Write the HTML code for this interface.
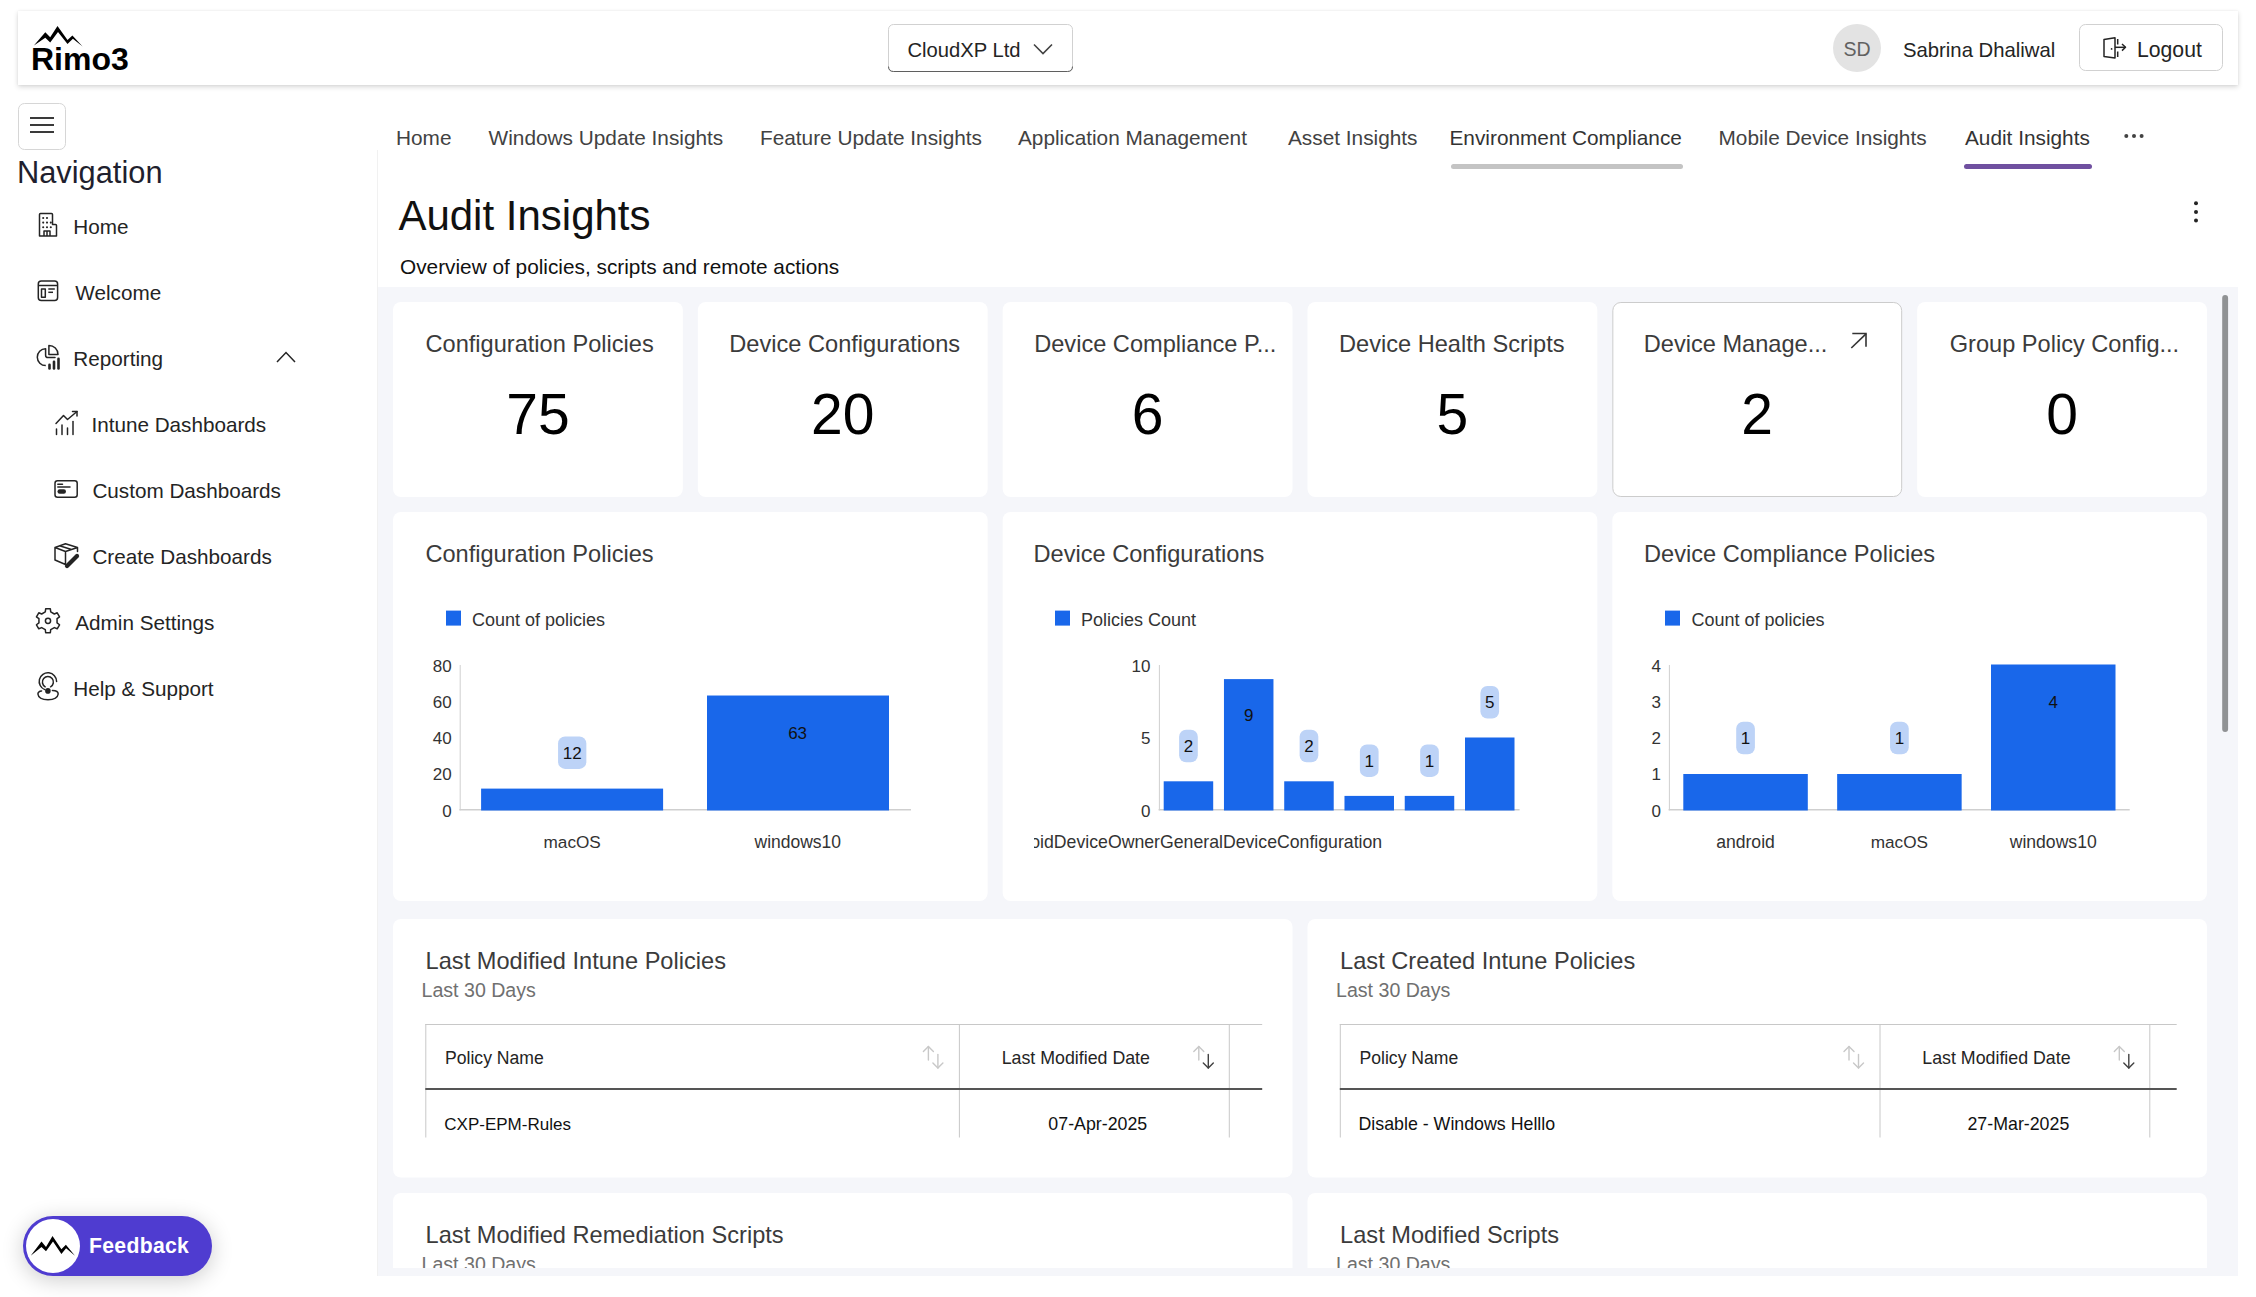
<!DOCTYPE html>
<html><head><meta charset="utf-8"><title>Audit Insights</title>
<style>
*{box-sizing:border-box;margin:0;padding:0}
html,body{width:2256px;height:1297px;overflow:hidden;background:#fff;font-family:"Liberation Sans", sans-serif}
#hdr{position:absolute;left:18px;top:11px;width:2220px;height:74px;background:#fff;box-shadow:0 2px 5px rgba(0,0,0,0.16),0 0 2px rgba(0,0,0,0.06)}
svg{position:absolute;left:0;top:0}
svg text{font-family:"Liberation Sans", sans-serif;white-space:pre}
#fb{position:absolute;left:23px;top:1216px;width:189px;height:60px;border-radius:30px;background:#4f3cd0;box-shadow:0 4px 22px rgba(0,0,0,0.20)}
#fbc{position:absolute;left:2.7px;top:2.6px;width:54.3px;height:54.3px;border-radius:50%;background:#fff}
#fbt{position:absolute;left:66px;top:0;line-height:60px;font-size:21.2px;font-weight:700;color:#fff;white-space:nowrap;letter-spacing:0.3px}
</style></head><body>
<div id="hdr"></div>
<svg width="2256" height="1297" viewBox="0 0 2256 1297">
<rect x="378.00" y="287.00" width="1860.00" height="989.00" rx="0" fill="#f5f6fa" />
<line x1="377.5" y1="150" x2="377.5" y2="1276" stroke="#f1f1f1" stroke-width="1" />
<polygon points="33.9,45.6 45.3,32.2 50.2,37.3 57.5,26.1 67.5,40 72.4,35.4 82.6,46.6 72.9,38.8 67.5,44.1 58,31.9 50.2,42.4 45.3,37.8" fill="#000"/>
<text x="31.0" y="69.7" font-size="32" fill="#000" font-weight="700" text-anchor="start" >Rimo3</text>
<rect x="888.50" y="24.50" width="184.00" height="47.00" rx="5" fill="#fff" stroke="#d1d1d1" stroke-width="1"/>
<path d="M888.5,66.5 Q888.5,71.5 893.5,71.5 L1067.5,71.5 Q1072.5,71.5 1072.5,66.5" fill="none" stroke="#5f5f5f" stroke-width="1"/>
<text x="907.5" y="57.3" font-size="20.2" fill="#242424" font-weight="400" text-anchor="start" >CloudXP Ltd</text>
<polyline points="1034,44.5 1043,53.5 1052,44.5" fill="none" stroke="#424242" stroke-width="1.6"/>
<circle cx="1857" cy="48" r="24" fill="#e3e3e3"/>
<text x="1857.0" y="56.3" font-size="19.5" fill="#616161" font-weight="400" text-anchor="middle" >SD</text>
<text x="1903.0" y="57.2" font-size="20.3" fill="#242424" font-weight="400" text-anchor="start" >Sabrina Dhaliwal</text>
<rect x="2079.50" y="24.50" width="143.00" height="46.00" rx="6" fill="#fff" stroke="#d1d1d1" stroke-width="1"/>
<g fill="none" stroke="#242424" stroke-width="1.5" stroke-linejoin="round"><path d="M2104,39.5 L2115,37.8 L2115,58 L2104,56.4 Z"/><line x1="2117.7" y1="39" x2="2117.7" y2="44.5"/><line x1="2117.7" y1="51.5" x2="2117.7" y2="57"/><line x1="2115" y1="47.3" x2="2125.5" y2="47.3"/><polyline points="2122,44 2125.5,47.3 2122,50.6"/></g><circle cx="2111.6" cy="48.9" r="0.9" fill="#242424"/>
<text x="2137.0" y="56.7" font-size="21.2" fill="#242424" font-weight="400" text-anchor="start" >Logout</text>
<rect x="18.50" y="103.50" width="47.00" height="46.00" rx="6" fill="#fff" stroke="#d6d6d6" stroke-width="1"/>
<line x1="30" y1="118" x2="54" y2="118" stroke="#242424" stroke-width="1.8" />
<line x1="30" y1="125" x2="54" y2="125" stroke="#242424" stroke-width="1.8" />
<line x1="30" y1="132" x2="54" y2="132" stroke="#242424" stroke-width="1.8" />
<text x="17.0" y="183.0" font-size="30.8" fill="#1f1f2e" font-weight="400" text-anchor="start" >Navigation</text>
<text x="73.3" y="234.2" font-size="20.7" fill="#242424" font-weight="400" text-anchor="start" >Home</text>
<text x="75.3" y="300.2" font-size="20.7" fill="#242424" font-weight="400" text-anchor="start" >Welcome</text>
<text x="73.3" y="366.3" font-size="20.7" fill="#242424" font-weight="400" text-anchor="start" >Reporting</text>
<text x="91.4" y="432.0" font-size="20.7" fill="#242424" font-weight="400" text-anchor="start" >Intune Dashboards</text>
<text x="92.4" y="498.0" font-size="20.7" fill="#242424" font-weight="400" text-anchor="start" >Custom Dashboards</text>
<text x="92.4" y="564.0" font-size="20.7" fill="#242424" font-weight="400" text-anchor="start" >Create Dashboards</text>
<text x="75.3" y="630.2" font-size="20.7" fill="#242424" font-weight="400" text-anchor="start" >Admin Settings</text>
<text x="73.3" y="696.3" font-size="20.7" fill="#242424" font-weight="400" text-anchor="start" >Help &amp; Support</text>
<polyline points="277,362 286,352.5 295,362" fill="none" stroke="#242424" stroke-width="1.5"/>
<g fill="none" stroke="#242424" stroke-width="1.5" stroke-linejoin="round"><path d="M39.5,236 L39.5,214.5 Q39.5,213.5 40.5,213.5 L51.5,213.5 Q52.5,213.5 52.5,214.5 L52.5,224.5 L55.5,224.5 Q56.5,224.5 56.5,225.5 L56.5,236 Z"/><path d="M44,236 L44,231 L50,231 L50,236 M47,231 L47,236"/><rect x="38.3" y="281" width="19.3" height="19.6" rx="3"/><line x1="38.3" y1="285.5" x2="57.6" y2="285.5"/><rect x="41.5" y="289" width="3.8" height="8.3"/><line x1="48.3" y1="289" x2="54.8" y2="289"/><line x1="48.3" y1="292.3" x2="53" y2="292.3"/><path d="M45.6,348.8 A8.4,8.4 0 0 0 45.8,365.6"/><path d="M45.6,348.8 L45.6,355.2 Q45.6,357.6 48,357.6 L55,357.6" stroke-linecap="round"/><path d="M48.9,345.4 L48.9,354.5 L58,354.5 A9.1,9.1 0 0 0 48.9,345.4 Z"/></g>
<circle cx="43.2" cy="218" r="1.05" fill="#242424"/>
<circle cx="47" cy="218" r="1.05" fill="#242424"/>
<circle cx="43.2" cy="222.6" r="1.05" fill="#242424"/>
<circle cx="47" cy="222.6" r="1.05" fill="#242424"/>
<circle cx="50.8" cy="222.6" r="1.05" fill="#242424"/>
<circle cx="43.2" cy="227.2" r="1.05" fill="#242424"/>
<circle cx="47" cy="227.2" r="1.05" fill="#242424"/>
<circle cx="50.8" cy="227.2" r="1.05" fill="#242424"/>
<rect x="48.20" y="363.60" width="2.60" height="6.10" rx="1.3" fill="#242424" />
<rect x="52.70" y="360.50" width="2.60" height="9.20" rx="1.3" fill="#242424" />
<rect x="57.20" y="357.60" width="2.60" height="12.10" rx="1.3" fill="#242424" />
<g fill="none" stroke="#242424" stroke-width="1.5" stroke-linejoin="round" stroke-linecap="round"><polyline points="56,423.5 63.5,415.5 67.5,419.5 77,411.5"/><polyline points="72.5,411.5 77,411.5 77,416"/><line x1="56.5" y1="429" x2="56.5" y2="434.5"/><line x1="62" y1="425" x2="62" y2="434.5"/><line x1="67.5" y1="428" x2="67.5" y2="434.5"/><line x1="73" y1="421.5" x2="73" y2="434.5"/><rect x="55" y="480.8" width="22.2" height="16.5" rx="2.5"/><line x1="57.8" y1="484.2" x2="62.5" y2="484.2"/><line x1="57.8" y1="487" x2="70" y2="487"/><path d="M55,547.5 L65.5,543.8 L77.5,547.5 L77.5,551.5 M55,547.5 L55,560 L65.5,564.5 M55,547.5 L65.5,551.5 L77.5,547.5 M65.5,551.5 L65.5,564 M59.5,545.8 L71.5,549.5"/></g>
<rect x="57.50" y="489.30" width="8.50" height="4.50" rx="2.2" fill="#242424" />
<line x1="67" y1="566" x2="77" y2="556" stroke="#242424" stroke-width="4.2" stroke-linecap="round"/>
<path d="M45.28,611.91 L45.67,608.82 L50.33,608.82 L50.72,611.91 L54.34,614.00 L57.21,612.80 L59.54,616.83 L57.06,618.71 L57.06,622.89 L59.54,624.77 L57.21,628.80 L54.34,627.60 L50.72,629.69 L50.33,632.78 L45.67,632.78 L45.28,629.69 L41.66,627.60 L38.79,628.80 L36.46,624.77 L38.94,622.89 L38.94,618.71 L36.46,616.83 L38.79,612.80 L41.66,614.00 Z" fill="none" stroke="#242424" stroke-width="1.5" stroke-linejoin="round"/>
<circle cx="48" cy="620.8" r="2.6" fill="none" stroke="#242424" stroke-width="1.5"/>
<g fill="none" stroke="#242424" stroke-width="1.5" stroke-linecap="round"><path d="M44.8,689.6 A8.7,8.7 0 1 1 56.6,681.4"/><path d="M45.2,686.8 A5.5,5.5 0 1 1 50.6,686.8"/><path d="M41.6,690.9 Q38,691.2 37.9,694 Q38.6,699.7 48,699.7 Q57.4,699.7 58.2,694 Q58,690.5 52.4,690.6"/></g><circle cx="47.9" cy="690.9" r="2.8" fill="#242424"/>
<text x="396.0" y="145.4" font-size="20.8" fill="#424242" font-weight="400" text-anchor="start" >Home</text>
<text x="488.6" y="145.4" font-size="20.8" fill="#424242" font-weight="400" text-anchor="start" >Windows Update Insights</text>
<text x="760.0" y="145.4" font-size="20.8" fill="#424242" font-weight="400" text-anchor="start" >Feature Update Insights</text>
<text x="1018.0" y="145.4" font-size="20.8" fill="#424242" font-weight="400" text-anchor="start" >Application Management</text>
<text x="1288.0" y="145.4" font-size="20.8" fill="#424242" font-weight="400" text-anchor="start" >Asset Insights</text>
<text x="1449.5" y="145.4" font-size="20.8" fill="#333333" font-weight="400" text-anchor="start" >Environment Compliance</text>
<text x="1718.5" y="145.4" font-size="20.8" fill="#424242" font-weight="400" text-anchor="start" >Mobile Device Insights</text>
<text x="1965.0" y="145.4" font-size="20.8" fill="#333333" font-weight="400" text-anchor="start" >Audit Insights</text>
<rect x="1451.00" y="164.00" width="232.00" height="5.00" rx="2.5" fill="#c4c4c4" />
<rect x="1964.00" y="164.00" width="128.00" height="5.00" rx="2.5" fill="#7050a0" />
<circle cx="2126.3" cy="136" r="2" fill="#424242"/>
<circle cx="2134" cy="136" r="2" fill="#424242"/>
<circle cx="2141.6" cy="136" r="2" fill="#424242"/>
<circle cx="2196" cy="203.2" r="2" fill="#242424"/>
<circle cx="2196" cy="212" r="2" fill="#242424"/>
<circle cx="2196" cy="220.6" r="2" fill="#242424"/>
<text x="398.4" y="230.0" font-size="42" fill="#111" font-weight="400" text-anchor="start" >Audit Insights</text>
<text x="400.0" y="273.8" font-size="20.8" fill="#111" font-weight="400" text-anchor="start" >Overview of policies, scripts and remote actions</text>
<rect x="2222.20" y="295.00" width="5.90" height="437.00" rx="2.95" fill="#909294" />
<rect x="393.00" y="302.00" width="289.83" height="195.00" rx="8" fill="#fff" />
<text x="425.5" y="352.3" font-size="23.6" fill="#3b3b3b" font-weight="400" text-anchor="start" >Configuration Policies</text>
<text x="537.9" y="434.2" font-size="57" fill="#000" font-weight="400" text-anchor="middle" >75</text>
<rect x="697.83" y="302.00" width="289.83" height="195.00" rx="8" fill="#fff" />
<text x="729.3" y="352.3" font-size="23.6" fill="#3b3b3b" font-weight="400" text-anchor="start" >Device Configurations</text>
<text x="842.7" y="434.2" font-size="57" fill="#000" font-weight="400" text-anchor="middle" >20</text>
<rect x="1002.67" y="302.00" width="289.83" height="195.00" rx="8" fill="#fff" />
<text x="1034.2" y="352.3" font-size="23.6" fill="#3b3b3b" font-weight="400" text-anchor="start" >Device Compliance P...</text>
<text x="1147.6" y="434.2" font-size="57" fill="#000" font-weight="400" text-anchor="middle" >6</text>
<rect x="1307.50" y="302.00" width="289.83" height="195.00" rx="8" fill="#fff" />
<text x="1339.0" y="352.3" font-size="23.6" fill="#3b3b3b" font-weight="400" text-anchor="start" >Device Health Scripts</text>
<text x="1452.4" y="434.2" font-size="57" fill="#000" font-weight="400" text-anchor="middle" >5</text>
<rect x="1612.83" y="302.50" width="288.83" height="194.00" rx="8" fill="#fff" stroke="#cccccc" stroke-width="1"/>
<text x="1643.8" y="352.3" font-size="23.6" fill="#3b3b3b" font-weight="400" text-anchor="start" >Device Manage...</text>
<text x="1757.2" y="434.2" font-size="57" fill="#000" font-weight="400" text-anchor="middle" >2</text>
<rect x="1917.17" y="302.00" width="289.83" height="195.00" rx="8" fill="#fff" />
<text x="1949.7" y="352.3" font-size="23.6" fill="#3b3b3b" font-weight="400" text-anchor="start" >Group Policy Config...</text>
<text x="2062.1" y="434.2" font-size="57" fill="#000" font-weight="400" text-anchor="middle" >0</text>
<g fill="none" stroke="#333" stroke-width="1.6"><line x1="1851.3" y1="348" x2="1866" y2="333.8"/><polyline points="1852.3,333.5 1866,333.5 1866,346.8"/></g>
<rect x="393.00" y="512.00" width="594.67" height="389.00" rx="8" fill="#fff" />
<rect x="1002.67" y="512.00" width="594.67" height="389.00" rx="8" fill="#fff" />
<rect x="1612.33" y="512.00" width="594.67" height="389.00" rx="8" fill="#fff" />
<text x="425.4" y="562.1" font-size="23.6" fill="#3b3b3b" font-weight="400" text-anchor="start" >Configuration Policies</text>
<rect x="446.00" y="610.60" width="15.00" height="15.00" rx="0" fill="#1967ea" />
<text x="472.0" y="625.9" font-size="18" fill="#333" font-weight="400" text-anchor="start" >Count of policies</text>
<text x="451.6" y="671.5" font-size="17" fill="#333" font-weight="400" text-anchor="end" >80</text>
<text x="451.6" y="707.6" font-size="17" fill="#333" font-weight="400" text-anchor="end" >60</text>
<text x="451.6" y="744.4" font-size="17" fill="#333" font-weight="400" text-anchor="end" >40</text>
<text x="451.6" y="780.4" font-size="17" fill="#333" font-weight="400" text-anchor="end" >20</text>
<text x="451.6" y="816.5" font-size="17" fill="#333" font-weight="400" text-anchor="end" >0</text>
<line x1="460.2" y1="665" x2="460.2" y2="810.3" stroke="#cfcfcf" stroke-width="1" />
<line x1="459.4" y1="809.8" x2="911" y2="809.8" stroke="#cfcfcf" stroke-width="1.6" />
<rect x="481.10" y="788.60" width="182.00" height="21.90" rx="0" fill="#1967ea" />
<rect x="707.00" y="695.52" width="182.00" height="114.97" rx="0" fill="#1967ea" />
<rect x="558.05" y="736.40" width="28.30" height="32.50" rx="7" fill="#bdd3f7" />
<text x="572.2" y="758.6" font-size="17" fill="#111" font-weight="400" text-anchor="middle" >12</text>
<text x="797.6" y="738.7" font-size="17" fill="#111" font-weight="400" text-anchor="middle" >63</text>
<text x="572.2" y="848.4" font-size="17.2" fill="#333" font-weight="400" text-anchor="middle" >macOS</text>
<text x="797.8" y="848.4" font-size="17.5" fill="#333" font-weight="400" text-anchor="middle" >windows10</text>
<text x="1033.5" y="562.1" font-size="23.6" fill="#3b3b3b" font-weight="400" text-anchor="start" >Device Configurations</text>
<rect x="1055.00" y="610.60" width="15.00" height="15.00" rx="0" fill="#1967ea" />
<text x="1081.0" y="625.9" font-size="18" fill="#333" font-weight="400" text-anchor="start" >Policies Count</text>
<text x="1150.5" y="671.5" font-size="17" fill="#333" font-weight="400" text-anchor="end" >10</text>
<text x="1150.5" y="707.6" font-size="17" fill="#333" font-weight="400" text-anchor="end" ></text>
<text x="1150.5" y="744.4" font-size="17" fill="#333" font-weight="400" text-anchor="end" >5</text>
<text x="1150.5" y="780.4" font-size="17" fill="#333" font-weight="400" text-anchor="end" ></text>
<text x="1150.5" y="816.5" font-size="17" fill="#333" font-weight="400" text-anchor="end" >0</text>
<line x1="1159.4" y1="665" x2="1159.4" y2="810.3" stroke="#cfcfcf" stroke-width="1" />
<line x1="1158.6" y1="809.8" x2="1519.6" y2="809.8" stroke="#cfcfcf" stroke-width="1.6" />
<rect x="1163.70" y="781.30" width="49.50" height="29.20" rx="0" fill="#1967ea" />
<rect x="1179.10" y="729.80" width="18.70" height="32.50" rx="7" fill="#bdd3f7" />
<text x="1188.5" y="752.0" font-size="17" fill="#111" font-weight="400" text-anchor="middle" >2</text>
<rect x="1223.96" y="679.10" width="49.50" height="131.40" rx="0" fill="#1967ea" />
<text x="1248.7" y="721.2" font-size="17" fill="#111" font-weight="400" text-anchor="middle" >9</text>
<rect x="1284.22" y="781.30" width="49.50" height="29.20" rx="0" fill="#1967ea" />
<rect x="1299.62" y="729.80" width="18.70" height="32.50" rx="7" fill="#bdd3f7" />
<text x="1309.0" y="752.0" font-size="17" fill="#111" font-weight="400" text-anchor="middle" >2</text>
<rect x="1344.48" y="795.90" width="49.50" height="14.60" rx="0" fill="#1967ea" />
<rect x="1359.88" y="744.40" width="18.70" height="32.50" rx="7" fill="#bdd3f7" />
<text x="1369.2" y="766.6" font-size="17" fill="#111" font-weight="400" text-anchor="middle" >1</text>
<rect x="1404.74" y="795.90" width="49.50" height="14.60" rx="0" fill="#1967ea" />
<rect x="1420.14" y="744.40" width="18.70" height="32.50" rx="7" fill="#bdd3f7" />
<text x="1429.5" y="766.6" font-size="17" fill="#111" font-weight="400" text-anchor="middle" >1</text>
<rect x="1465.00" y="737.50" width="49.50" height="73.00" rx="0" fill="#1967ea" />
<rect x="1480.40" y="686.00" width="18.70" height="32.50" rx="7" fill="#bdd3f7" />
<text x="1489.8" y="708.2" font-size="17" fill="#111" font-weight="400" text-anchor="middle" >5</text>
<clipPath id="c2"><rect x="1034" y="820" width="540" height="40"/></clipPath>
<text x="1188.5" y="847.5" font-size="17.7" fill="#333" font-weight="400" text-anchor="middle" clip-path="url(#c2)">androidDeviceOwnerGeneralDeviceConfiguration</text>
<text x="1644.0" y="562.1" font-size="23.6" fill="#3b3b3b" font-weight="400" text-anchor="start" >Device Compliance Policies</text>
<rect x="1665.00" y="610.60" width="15.00" height="15.00" rx="0" fill="#1967ea" />
<text x="1691.5" y="625.9" font-size="18" fill="#333" font-weight="400" text-anchor="start" >Count of policies</text>
<text x="1661.0" y="671.5" font-size="17" fill="#333" font-weight="400" text-anchor="end" >4</text>
<text x="1661.0" y="707.6" font-size="17" fill="#333" font-weight="400" text-anchor="end" >3</text>
<text x="1661.0" y="744.4" font-size="17" fill="#333" font-weight="400" text-anchor="end" >2</text>
<text x="1661.0" y="780.4" font-size="17" fill="#333" font-weight="400" text-anchor="end" >1</text>
<text x="1661.0" y="816.5" font-size="17" fill="#333" font-weight="400" text-anchor="end" >0</text>
<line x1="1669.4" y1="665" x2="1669.4" y2="810.3" stroke="#cfcfcf" stroke-width="1" />
<line x1="1668.6" y1="809.8" x2="2129.7" y2="809.8" stroke="#cfcfcf" stroke-width="1.6" />
<rect x="1683.30" y="774.00" width="124.50" height="36.50" rx="0" fill="#1967ea" />
<rect x="1736.20" y="721.80" width="18.70" height="32.50" rx="7" fill="#bdd3f7" />
<text x="1745.5" y="744.0" font-size="17" fill="#111" font-weight="400" text-anchor="middle" >1</text>
<text x="1745.5" y="848.4" font-size="17.6" fill="#333" font-weight="400" text-anchor="middle" >android</text>
<rect x="1837.15" y="774.00" width="124.50" height="36.50" rx="0" fill="#1967ea" />
<rect x="1890.05" y="721.80" width="18.70" height="32.50" rx="7" fill="#bdd3f7" />
<text x="1899.4" y="744.0" font-size="17" fill="#111" font-weight="400" text-anchor="middle" >1</text>
<text x="1899.4" y="848.4" font-size="17.2" fill="#333" font-weight="400" text-anchor="middle" >macOS</text>
<rect x="1991.00" y="664.50" width="124.50" height="146.00" rx="0" fill="#1967ea" />
<text x="2053.2" y="707.9" font-size="17" fill="#111" font-weight="400" text-anchor="middle" >4</text>
<text x="2053.2" y="848.4" font-size="17.6" fill="#333" font-weight="400" text-anchor="middle" >windows10</text>
<clipPath id="rowclip"><rect x="378" y="287" width="1860" height="981"/></clipPath>
<rect x="393.00" y="919.00" width="899.50" height="258.50" rx="8" fill="#fff" />
<text x="425.6" y="969.3" font-size="23.6" fill="#3b3b3b" font-weight="400" text-anchor="start" >Last Modified Intune Policies</text>
<text x="421.5" y="997.2" font-size="19.6" fill="#707070" font-weight="400" text-anchor="start" >Last 30 Days</text>
<line x1="425.3" y1="1024.5" x2="1262.2" y2="1024.5" stroke="#c8c8c8" stroke-width="1" />
<line x1="425.8" y1="1024" x2="425.8" y2="1137.5" stroke="#c8c8c8" stroke-width="1" />
<line x1="959.4" y1="1024" x2="959.4" y2="1137.5" stroke="#c8c8c8" stroke-width="1" />
<line x1="1229.3" y1="1024" x2="1229.3" y2="1137.5" stroke="#c8c8c8" stroke-width="1" />
<line x1="425.3" y1="1089" x2="1262.2" y2="1089" stroke="#555" stroke-width="2" />
<text x="445.0" y="1064.0" font-size="17.6" fill="#242424" font-weight="400" text-anchor="start" >Policy Name</text>
<g fill="none" stroke-width="1.4" stroke-linecap="round" stroke-linejoin="round"><g stroke="#c8c8c8"><line x1="928.4" y1="1046.5" x2="928.4" y2="1060"/><polyline points="923.4,1051.5 928.4,1046.5 933.4,1051.5"/></g><g stroke="#c8c8c8"><line x1="937.9" y1="1054.5" x2="937.9" y2="1068"/><polyline points="932.9,1063 937.9,1068 942.9,1063"/></g></g>
<text x="1001.7" y="1064.0" font-size="17.8" fill="#242424" font-weight="400" text-anchor="start" >Last Modified Date</text>
<g fill="none" stroke-width="1.4" stroke-linecap="round" stroke-linejoin="round"><g stroke="#c8c8c8"><line x1="1198.8" y1="1046.5" x2="1198.8" y2="1060"/><polyline points="1193.8,1051.5 1198.8,1046.5 1203.8,1051.5"/></g><g stroke="#424242"><line x1="1208.3" y1="1054.5" x2="1208.3" y2="1068"/><polyline points="1203.3,1063 1208.3,1068 1213.3,1063"/></g></g>
<text x="444.3" y="1129.6" font-size="17.0" fill="#111" font-weight="400" text-anchor="start" >CXP-EPM-Rules</text>
<text x="1097.8" y="1129.6" font-size="17.8" fill="#111" font-weight="400" text-anchor="middle" >07-Apr-2025</text>
<rect x="1307.50" y="919.00" width="899.50" height="258.50" rx="8" fill="#fff" />
<text x="1340.1" y="969.3" font-size="23.6" fill="#3b3b3b" font-weight="400" text-anchor="start" >Last Created Intune Policies</text>
<text x="1336.0" y="997.2" font-size="19.6" fill="#707070" font-weight="400" text-anchor="start" >Last 30 Days</text>
<line x1="1339.8" y1="1024.5" x2="2176.7" y2="1024.5" stroke="#c8c8c8" stroke-width="1" />
<line x1="1340.3" y1="1024" x2="1340.3" y2="1137.5" stroke="#c8c8c8" stroke-width="1" />
<line x1="1880" y1="1024" x2="1880" y2="1137.5" stroke="#c8c8c8" stroke-width="1" />
<line x1="2149.8" y1="1024" x2="2149.8" y2="1137.5" stroke="#c8c8c8" stroke-width="1" />
<line x1="1339.8" y1="1089" x2="2176.7" y2="1089" stroke="#555" stroke-width="2" />
<text x="1359.5" y="1064.0" font-size="17.6" fill="#242424" font-weight="400" text-anchor="start" >Policy Name</text>
<g fill="none" stroke-width="1.4" stroke-linecap="round" stroke-linejoin="round"><g stroke="#c8c8c8"><line x1="1849.0" y1="1046.5" x2="1849.0" y2="1060"/><polyline points="1844.0,1051.5 1849.0,1046.5 1854.0,1051.5"/></g><g stroke="#c8c8c8"><line x1="1858.5" y1="1054.5" x2="1858.5" y2="1068"/><polyline points="1853.5,1063 1858.5,1068 1863.5,1063"/></g></g>
<text x="1922.3" y="1064.0" font-size="17.8" fill="#242424" font-weight="400" text-anchor="start" >Last Modified Date</text>
<g fill="none" stroke-width="1.4" stroke-linecap="round" stroke-linejoin="round"><g stroke="#c8c8c8"><line x1="2119.3" y1="1046.5" x2="2119.3" y2="1060"/><polyline points="2114.3,1051.5 2119.3,1046.5 2124.3,1051.5"/></g><g stroke="#424242"><line x1="2128.8" y1="1054.5" x2="2128.8" y2="1068"/><polyline points="2123.8,1063 2128.8,1068 2133.8,1063"/></g></g>
<text x="1358.5" y="1129.6" font-size="17.8" fill="#111" font-weight="400" text-anchor="start" >Disable - Windows Helllo</text>
<text x="2018.4" y="1129.6" font-size="17.8" fill="#111" font-weight="400" text-anchor="middle" >27-Mar-2025</text>
<g clip-path="url(#rowclip)">
<rect x="393.00" y="1193.00" width="899.50" height="200.00" rx="8" fill="#fff" />
<text x="425.6" y="1243.2" font-size="23.6" fill="#3b3b3b" font-weight="400" text-anchor="start" >Last Modified Remediation Scripts</text>
<text x="421.5" y="1271.0" font-size="19.6" fill="#707070" font-weight="400" text-anchor="start" >Last 30 Days</text>
<rect x="1307.50" y="1193.00" width="899.50" height="200.00" rx="8" fill="#fff" />
<text x="1340.1" y="1243.2" font-size="23.6" fill="#3b3b3b" font-weight="400" text-anchor="start" >Last Modified Scripts</text>
<text x="1336.0" y="1271.0" font-size="19.6" fill="#707070" font-weight="400" text-anchor="start" >Last 30 Days</text>
</g>
</svg>
<div id="fb"><div id="fbc"><svg width="60" height="60" viewBox="0 0 60 60" style="position:absolute;left:-2.7px;top:-2.6px"><polygon points="7.7,39.8 18.5,25.4 23,30.9 29.5,19.9 38.4,33.2 42.9,28.8 52,39.8 43.1,32.2 38.4,38 30,25.6 23,35.3 18.5,30.9" fill="#000"/></svg></div><div id="fbt">Feedback</div></div>
</body></html>
